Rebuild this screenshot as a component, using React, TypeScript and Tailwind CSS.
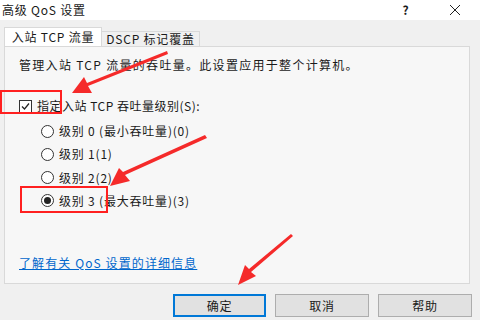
import React from 'react'

const font = { fontFamily: '"Noto Sans CJK SC", "Liberation Sans", sans-serif' }

function Radio({ checked, label }: { checked?: boolean; label: string }) {
  return (
    <div className="flex items-center gap-[5px] h-[14px] leading-[14px]">
      <span className="w-[13px] h-[13px] rounded-full border border-[#333] bg-white flex items-center justify-center">
        {checked && <span className="w-[7px] h-[7px] rounded-full bg-[#222]" />}
      </span>
      <span>{label}</span>
    </div>
  )
}

export default function App() {
  const levels = [
    { label: '级别 0 (最小吞吐量)(0)', checked: false },
    { label: '级别 1(1)', checked: false },
    { label: '级别 2(2)', checked: false },
    { label: '级别 3 (最大吞吐量)(3)', checked: true },
  ]

  return (
    <div className="relative w-[480px] h-[320px] bg-[#f0f0f0] overflow-hidden text-[12px] tracking-[0.8px] text-[#1a1a1a]" style={font}>
      {/* 标题栏 */}
      <div className="h-[20px] bg-white flex items-center pl-[2px]">
        <span className="leading-none">高级 QoS 设置</span>
        <span className="ml-auto w-[14px] text-center font-bold leading-none">?</span>
        <svg className="ml-[36px] mr-[19px]" width="12" height="12" viewBox="0 0 12 12">
          <path d="M1 1 L11 11 M11 1 L1 11" stroke="#222" strokeWidth="1" />
        </svg>
      </div>

      {/* 选项卡 */}
      <div className="flex items-end pl-[4px] mt-[7px] h-[19px]">
        <div className="h-[19px] w-[98px] bg-white border border-b-0 border-[#d9d9d9] flex items-center justify-center">
          入站 TCP 流量
        </div>
        <div className="h-[15px] w-[98px] bg-[#f0f0f0] border border-l-0 border-b-0 border-[#d9d9d9] flex items-center justify-center">
          DSCP 标记覆盖
        </div>
      </div>

      {/* 面板 */}
      <div className="mx-[4px] w-[466px] h-[238px] bg-[#f7f7f7] border border-[#d9d9d9] flex flex-col pl-[14px]">
        <p className="mt-[11px] leading-[14px] tracking-[1.3px]">管理入站 TCP 流量的吞吐量。此设置应用于整个计算机。</p>

        <div className="mt-[27px] h-[14px] leading-[14px] flex items-center gap-[5px] tracking-[0.5px]">
          <span className="w-[13px] h-[13px] border border-[#333] bg-white flex items-center justify-center">
            <svg width="11" height="11" viewBox="0 0 11 11">
              <path d="M2 5.5 L4.5 8 L9 2.5" fill="none" stroke="#222" strokeWidth="1.2" />
            </svg>
          </span>
          <span>指定入站 TCP 吞吐量级别(S):</span>
        </div>

        <div className="flex flex-col pl-[22px] mt-[11px] gap-[9.3px]">
          {levels.map((l) => (
            <Radio key={l.label} label={l.label} checked={l.checked} />
          ))}
        </div>

        <a className="mt-auto mb-[13px] text-[#0066cc] underline leading-[14px] tracking-[1.1px]">了解有关 QoS 设置的详细信息</a>
      </div>

      {/* 按钮 */}
      <div className="flex justify-end gap-[9px] pr-[8px] mt-[10px]">
        <button className="w-[93px] h-[23px] bg-[#e1e1e1] border-2 border-[#0078d7]">确定</button>
        <button className="w-[94px] h-[23px] bg-[#e1e1e1] border border-[#adadad]">取消</button>
        <button className="w-[94px] h-[23px] bg-[#e1e1e1] border border-[#adadad]">帮助</button>
      </div>

      {/* 红色标注 */}
      <div className="absolute left-[0px] top-[90px] w-[62px] h-[24px] border-2 border-[#ff2020]" />
      <div className="absolute left-[20px] top-[186px] w-[88px] h-[27px] border-2 border-[#ff2020]" />
      <svg className="absolute inset-0 pointer-events-none" width="480" height="320">
        <g fill="#f52a2a">
          <polygon points="167,51 168,54 88,86 92,93 72,93 84,77 87,83" />
          <polygon points="205,135 207,138 125,175 130,181 110,186 119,168 123,172" />
          <polygon points="291,234 293,236 251,272 256,276 238,285 245,265 249,269" />
        </g>
      </svg>
    </div>
  )
}
